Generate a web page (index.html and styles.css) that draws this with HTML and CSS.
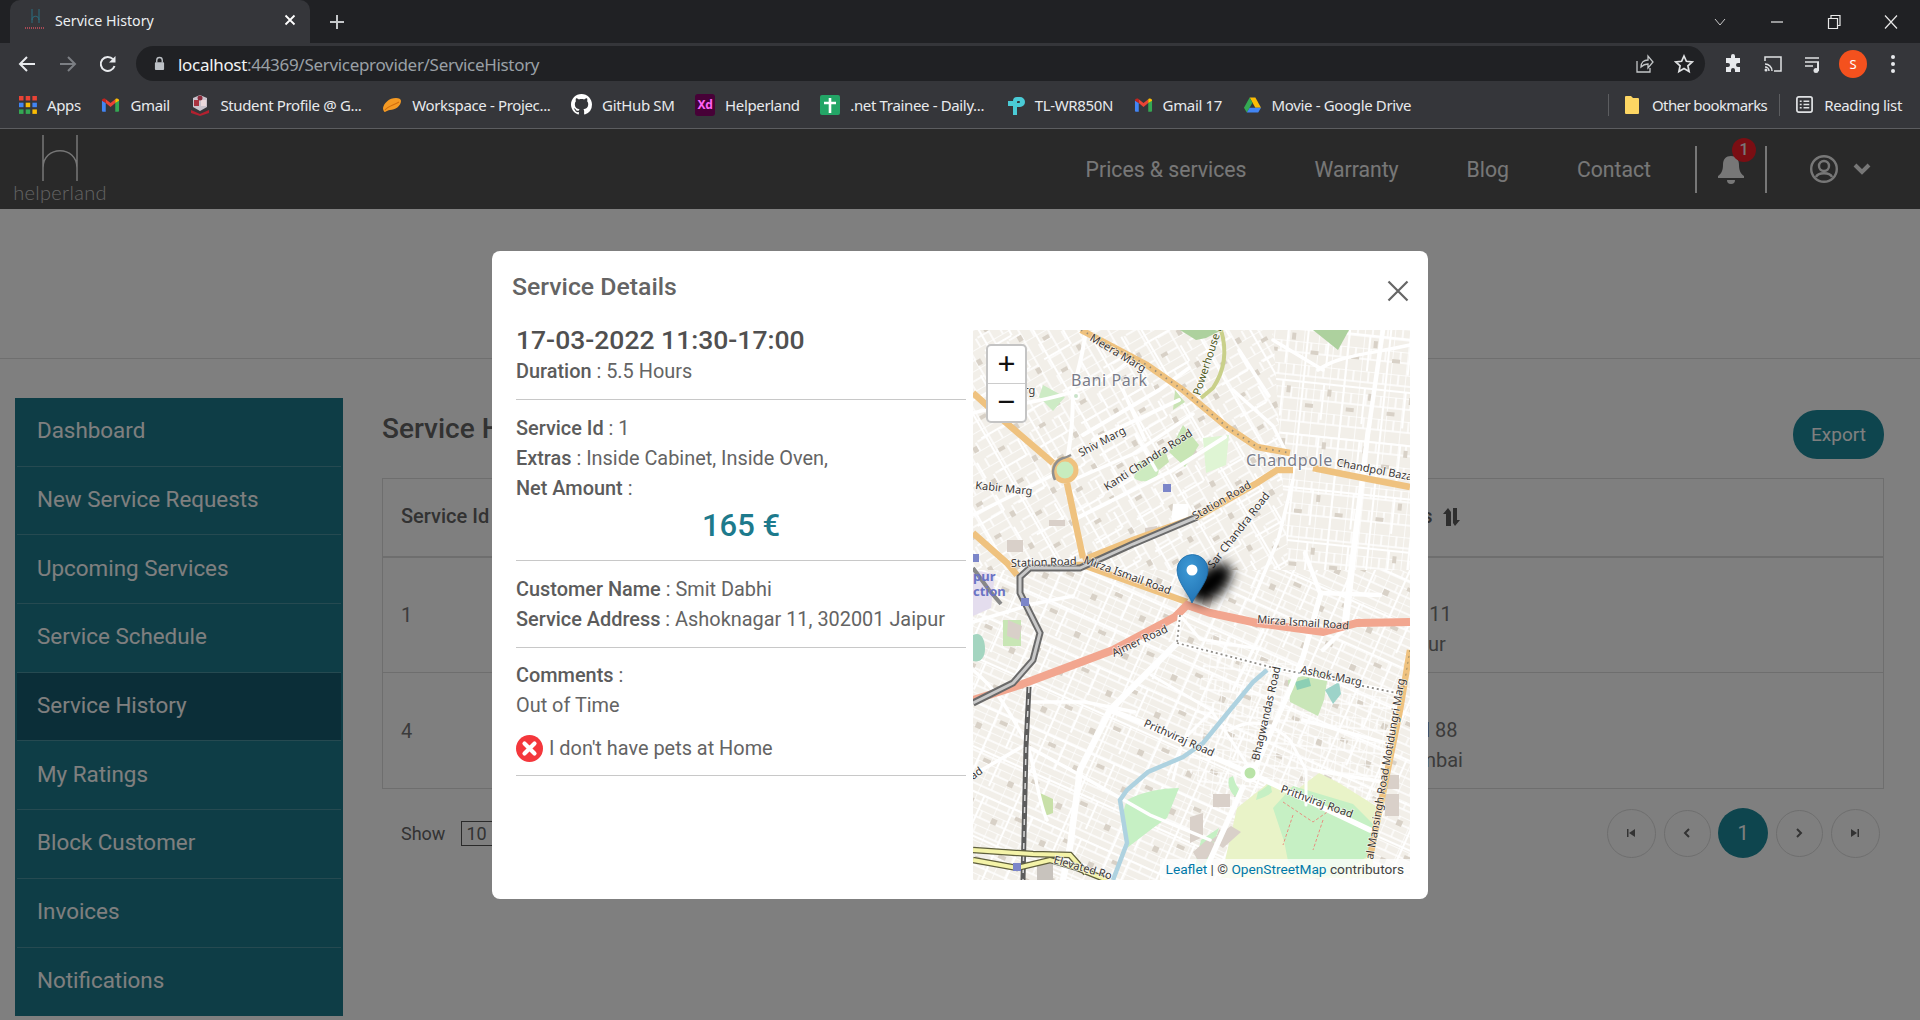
FILE: index.html
```html
<!DOCTYPE html>
<html lang="en">
<head>
<meta charset="utf-8">
<title>Service History</title>
<link rel="stylesheet" href="styles.css">
</head>
<body>
<svg class="defs" width="0" height="0" aria-hidden="true">
  <symbol id="gmail" viewBox="0 0 20 16">
    <path d="M1 15V3l4 3v9H2a1 1 0 0 1-1-1z" fill="#4285f4"/>
    <path d="M15 15V6l4-3v11a1 1 0 0 1-1 1z" fill="#34a853"/>
    <path d="M1 3.5C1 1.500 3 .5 4.500 1.500L5 2v4z" fill="#c5221f"/>
    <path d="M5 6V2l5 4 5-4v4l-5 4z" fill="#ea4335"/>
    <path d="M15 2l.5-.5C17 .5 19 1.500 19 3.500L15 6z" fill="#fbbc04"/>
  </symbol>
</svg>
<div class="chrome">
  <div class="tabstrip">
    <div class="tab">
      <svg class="favicon" viewBox="0 0 22 26" width="22" height="26"><path d="M8 2v14M15 2v14M8 13c0-5 7-5 7 0" fill="none" stroke="#2a6f80" stroke-width="1"/><path d="M1 21h20" stroke="#a84a55" stroke-width="2" stroke-dasharray="1 1"/></svg>
      <span class="tab-title">Service History</span>
      <svg class="tab-close" viewBox="0 0 12 12" width="12" height="12"><path d="M1.500 1.500l9 9M10.500 1.500l-9 9" stroke="#fff" stroke-width="1.800"/></svg>
    </div>
    <svg class="new-tab" viewBox="0 0 16 16" width="16" height="16"><path d="M8 1v14M1 8h14" stroke="#c4c7c9" stroke-width="2"/></svg>
    <div class="win-controls">
      <svg viewBox="0 0 14 14" width="14" height="14"><path d="M2 4l5 6 5-6" fill="none" stroke="#c8c8c8" stroke-width="1"/></svg>
      <svg viewBox="0 0 14 14" width="14" height="14"><path d="M1 7h12" stroke="#e8e8e8" stroke-width="1.200"/></svg>
      <svg viewBox="0 0 14 14" width="14" height="14"><path d="M1.500 3.500h9v10h-9zM4 3.500v-3h9v10h-2.500" fill="none" stroke="#e8e8e8" stroke-width="1.200"/></svg>
      <svg viewBox="0 0 14 14" width="14" height="14"><path d="M1 .5l12 13M13 .5l-12 13" stroke="#e8e8e8" stroke-width="1.200"/></svg>
    </div>
  </div>
  <div class="toolbar">
    <svg class="tool back" viewBox="0 0 18 18" width="18" height="18"><path d="M17 9H2M9 2L2 9l7 7" fill="none" stroke="#e8eaed" stroke-width="2"/></svg>
    <svg class="tool fwd" viewBox="0 0 18 18" width="18" height="18"><path d="M1 9h15M9 2l7 7-7 7" fill="none" stroke="#7c7f84" stroke-width="2"/></svg>
    <svg class="tool reload" viewBox="0 0 18 18" width="18" height="18"><path d="M15.500 11A7 7 0 1 1 14 4.200" fill="none" stroke="#e8eaed" stroke-width="2"/><path d="M16.500 1v6.500H10z" fill="#e8eaed"/></svg>
    <div class="omnibox">
      <svg viewBox="0 0 12 16" width="11" height="15"><path d="M3 7V4.500a3 3 0 0 1 6 0V7" fill="none" stroke="#bdc1c6" stroke-width="1.500"/><rect x="1" y="6.500" width="10" height="8.500" rx="1" fill="#bdc1c6"/></svg>
      <span class="url"><span class="url-host">localhost</span>:44369/Serviceprovider/ServiceHistory</span>
      <svg class="omni-share" viewBox="0 0 20 20" width="20" height="20"><path d="M3 7v11h13v-4M7 13c0-5 3-7 7-7V2l5 6-5 6v-4c-3 0-5 1-7 3z" fill="none" stroke="#c4c7c9" stroke-width="1.300"/></svg>
      <svg class="omni-star" viewBox="0 0 20 20" width="20" height="20"><path d="M10 2l2.400 5.300 5.800.6-4.300 3.900 1.200 5.700L10 14.600 4.900 17.500l1.200-5.700L1.800 7.900l5.800-.6z" fill="none" stroke="#e0e2e4" stroke-width="1.700"/></svg>
    </div>
    <svg class="tool puzzle" viewBox="0 0 20 20" width="20" height="20"><path d="M8 2a2 2 0 0 1 4 0v2h5v5h-2a2 2 0 0 0 0 4h2v5h-5v-2a2 2 0 0 0-4 0v2H3v-5h2a2 2 0 0 0 0-4H3V4h5z" fill="#e8eaed"/></svg>
    <svg class="tool cast" viewBox="0 0 20 20" width="20" height="20"><path d="M2 7V3h16v14h-7" fill="none" stroke="#e0e2e4" stroke-width="1.500"/><path d="M2 10a7 7 0 0 1 7 7M2 13a4 4 0 0 1 4 4" fill="none" stroke="#e0e2e4" stroke-width="1.500"/><circle cx="3" cy="16" r="1.500" fill="#e0e2e4"/></svg>
    <svg class="tool media" viewBox="0 0 20 20" width="20" height="20"><path d="M2 4h14M2 8h14M2 12h8" stroke="#e0e2e4" stroke-width="1.600"/><path d="M15 8v9" stroke="#e0e2e4" stroke-width="2"/><circle cx="13" cy="16.500" r="2.500" fill="#e0e2e4"/></svg>
    <div class="avatar">S</div>
    <svg class="tool dots" viewBox="0 0 6 20" width="6" height="20"><circle cx="3" cy="3" r="2" fill="#e8eaed"/><circle cx="3" cy="10" r="2" fill="#e8eaed"/><circle cx="3" cy="17" r="2" fill="#e8eaed"/></svg>
  </div>
  <div class="bookmarks">
    <div class="bm"><svg viewBox="0 0 18 18" width="18" height="18"><g><rect width="4.500" height="4.500" fill="#ea4335"/><rect x="6.700" width="4.500" height="4.500" fill="#ea4335"/><rect x="13.400" width="4.500" height="4.500" fill="#ea4335"/><rect y="6.700" width="4.500" height="4.500" fill="#4285f4"/><rect x="6.700" y="6.700" width="4.500" height="4.500" fill="#fbbc04"/><rect x="13.400" y="6.700" width="4.500" height="4.500" fill="#4285f4"/><rect y="13.400" width="4.500" height="4.500" fill="#34a853"/><rect x="6.700" y="13.400" width="4.500" height="4.500" fill="#34a853"/><rect x="13.400" y="13.400" width="4.500" height="4.500" fill="#fbbc04"/></g></svg><span>Apps</span></div>
    <div class="bm"><svg viewBox="0 0 20 16" width="19" height="16"><use href="#gmail"/></svg><span>Gmail</span></div>
    <div class="bm"><svg viewBox="0 0 20 22" width="20" height="22"><path d="M3 4l7-3 7 3v9l-7 4-7-4z" fill="#c9c3cc"/><path d="M4 6h5v6H4z" fill="#a8323f"/><path d="M11 6h5v6h-5z" fill="#ead9dc"/><circle cx="10" cy="4" r="2.500" fill="#8a2c3c"/><path d="M1 16l9 4 9-4v3l-9 3-9-3z" fill="#b3202f"/></svg><span>Student Profile @ G...</span></div>
    <div class="bm"><svg viewBox="0 0 20 16" width="20" height="16"><path d="M1 11C2 6 7 1 14 1c3 0 5 1 5 3 0 5-6 9-11 9-2 0-3 1-5 2-1 0-2-2-2-4z" fill="#f59a23"/><path d="M3 13c3-4 9-5 14-8" stroke="#d26d0d" stroke-width="1.200" fill="none"/></svg><span>Workspace - Projec...</span></div>
    <div class="bm"><svg viewBox="0 0 16 16" width="21" height="21"><path fill="#fff" d="M8 0C3.58 0 0 3.58 0 8c0 3.54 2.290 6.530 5.470 7.590.4.070.550-.170.550-.380 0-.190-.010-.820-.010-1.490-2.010.370-2.530-.490-2.690-.940-.090-.230-.480-.940-.820-1.130-.280-.150-.680-.520-.010-.530.630-.010 1.080.580 1.230.820.720 1.210 1.870.870 2.330.660.070-.520.280-.870.510-1.070-1.780-.2-3.640-.890-3.640-3.950 0-.870.310-1.590.820-2.150-.080-.2-.360-1.020.080-2.120 0 0 .670-.210 2.200.820.640-.180 1.320-.270 2-.270.680 0 1.360.090 2 .270 1.530-1.040 2.200-.820 2.200-.820.440 1.100.160 1.920.080 2.120.510.560.820 1.270.820 2.150 0 3.070-1.870 3.750-3.650 3.950.290.250.540.730.540 1.480 0 1.070-.010 1.930-.010 2.200 0 .210.150.460.550.380A8.013 8.013 0 0 0 16 8c0-4.420-3.580-8-8-8z"/></svg><span>GitHub SM</span></div>
    <div class="bm"><span class="xd">Xd</span><span>Helperland</span></div>
    <div class="bm"><svg viewBox="0 0 20 20" width="20" height="20"><rect width="20" height="20" rx="2" fill="#23a566"/><path d="M10 3v15M4 8h12" stroke="#fff" stroke-width="2.600"/></svg><span>.net Trainee - Daily...</span></div>
    <div class="bm"><svg viewBox="0 0 20 20" width="20" height="20"><path d="M8 20v-9H3V6h5a4 4 0 0 1 4-4h3a5 5 0 0 1 0 10h-3v8z M12 7v1h2a1 1 0 0 0 0-2h-1a1 1 0 0 0-1 1z" fill="#4acbd6" fill-rule="evenodd"/></svg><span>TL-WR850N</span></div>
    <div class="bm"><svg viewBox="0 0 20 16" width="19" height="16"><use href="#gmail"/></svg><span>Gmail 17</span></div>
    <div class="bm"><svg viewBox="0 0 20 18" width="19" height="18"><path d="M7 1h6l6 11h-6z" fill="#fbbc04"/><path d="M7 1l3 5.500L4 17 1 12z" fill="#34a853"/><path d="M4 17l3-5h12l-3 5z" fill="#4285f4"/></svg><span>Movie - Google Drive</span></div>
    <div class="bm-right">
      <div class="bm bm-sep bm-other"><svg viewBox="0 0 16 20" width="16" height="20"><path d="M1 2a1 1 0 0 1 1-1h5l2 2h5a1 1 0 0 1 1 1v14a1 1 0 0 1-1 1H2a1 1 0 0 1-1-1z" fill="#fdd663"/></svg><span>Other bookmarks</span></div>
      <div class="bm bm-sep"><svg viewBox="0 0 20 20" width="19" height="19"><rect x="2" y="2" width="16" height="16" rx="2" fill="none" stroke="#e0e2e4" stroke-width="1.800"/><path d="M5 6.500h2M9 6.500h6M5 10h2M9 10h6M5 13.500h2M9 13.500h6" stroke="#e0e2e4" stroke-width="1.500"/></svg><span>Reading list</span></div>
    </div>
  </div>
</div>

<div class="page">
  <header class="site-nav">
    <a class="logo">
      <svg viewBox="0 0 36 46" width="36" height="46"><path d="M1 0v46M35 0v46M1 33C1 10 35 10 35 33" fill="none" stroke="#ededed" stroke-width="1.500"/></svg>
      <span class="logo-text">helperland</span>
    </a>
    <nav class="nav-links">
      <a>Prices &amp; services</a>
      <a>Warranty</a>
      <a>Blog</a>
      <a>Contact</a>
    </nav>
    <div class="notif">
      <svg viewBox="0 0 26 30" width="26" height="30"><path d="M13 2c-5 0-8 3-8 9 0 6-2 9-5 11v2h26v-2c-3-2-5-5-5-11 0-6-3-9-8-9z" fill="#efefef"/><path d="M9 26h8a4 4 0 0 1-8 0z" fill="#efefef"/></svg>
      <span class="notif-badge">1</span>
    </div>
    <div class="user-menu">
      <svg viewBox="0 0 28 28" width="28" height="28"><circle cx="14" cy="14" r="12.800" fill="none" stroke="#efefef" stroke-width="2.400"/><circle cx="14" cy="11" r="5" fill="none" stroke="#efefef" stroke-width="2.400"/><path d="M6 22c2-5 14-5 16 0" fill="none" stroke="#efefef" stroke-width="2.400"/></svg>
      <svg viewBox="0 0 18 14" width="18" height="14"><path d="M2 3l7 7 7-7" fill="none" stroke="#efefef" stroke-width="4"/></svg>
    </div>
  </header>
  <div class="banner"></div>
  <div class="content">
    <aside class="sidebar">
      <a class="side-item">Dashboard</a>
      <a class="side-item">New Service Requests</a>
      <a class="side-item">Upcoming Services</a>
      <a class="side-item">Service Schedule</a>
      <a class="side-item side-active">Service History</a>
      <a class="side-item">My Ratings</a>
      <a class="side-item">Block Customer</a>
      <a class="side-item">Invoices</a>
      <a class="side-item">Notifications</a>
    </aside>
    <main class="main">
      <div class="main-head">
        <h1>Service History</h1>
        <a class="export">Export</a>
      </div>
      <table class="table">
        <colgroup><col class="col-id"><col class="col-date"><col class="col-addr"><col></colgroup>
        <thead>
          <tr><th>Service Id</th><th>Service Date</th><th>Customer Details <svg class="sort" viewBox="0 0 18 18" width="18" height="18"><path d="M3 18V6H0l5-6 3 4v14zM10 0h4v12h3l-5 6-2-3z" fill="#5c5c5c"/></svg></th><th></th></tr>
        </thead>
        <tbody>
          <tr><td>1</td><td>17-03-2022</td><td class="addr-cell">Ashoknagar 11<br>302001 Jaipur</td><td></td></tr>
          <tr><td>4</td><td>20-03-2022</td><td class="addr-cell">Marine Road 88<br>400001 Mumbai</td><td></td></tr>
        </tbody>
      </table>
      <div class="table-foot">
        <div class="show"><span>Show</span><span class="select">10</span></div>
        <div class="pager">
          <span class="page-slot"><span class="page-btn edge"><svg viewBox="0 0 10 10" width="10" height="10"><path d="M1 1v8h1.500V1zM9 1L3 5l6 4z" fill="#666"/></svg></span></span>
          <span class="page-slot"><span class="page-btn step"><svg viewBox="0 0 10 10" width="10" height="10"><path d="M7 1L3 5l4 4" fill="none" stroke="#666" stroke-width="2"/></svg></span></span>
          <span class="page-slot"><span class="page-btn current">1</span></span>
          <span class="page-slot"><span class="page-btn step"><svg viewBox="0 0 10 10" width="10" height="10"><path d="M3 1l4 4-4 4" fill="none" stroke="#666" stroke-width="2"/></svg></span></span>
          <span class="page-slot"><span class="page-btn edge"><svg viewBox="0 0 10 10" width="10" height="10"><path d="M1 1l6 4-6 4zM7.500 1v8H9V1z" fill="#666"/></svg></span></span>
        </div>
      </div>
    </main>
  </div>

  <div class="backdrop"></div>
  <section class="modal">
    <div class="modal-head">
      <h2>Service Details</h2>
      <svg class="modal-close" viewBox="0 0 22 22" width="22" height="22"><path d="M1.500 1.500l19 19M20.500 1.500l-19 19" stroke="#666" stroke-width="2.200"/></svg>
    </div>
    <div class="modal-body">
      <div class="details">
        <div class="block">
          <div class="when">17-03-2022 11:30-17:00</div>
          <div class="line"><b>Duration</b> : 5.5 Hours</div>
        </div>
        <div class="block">
          <div class="line"><b>Service Id</b> : 1</div>
          <div class="line"><b>Extras</b> : Inside Cabinet, Inside Oven,</div>
          <div class="line"><b>Net Amount</b> :</div>
          <div class="amount">165 €</div>
        </div>
        <div class="block">
          <div class="line"><b>Customer Name</b> : Smit Dabhi</div>
          <div class="line"><b>Service Address</b> : Ashoknagar 11, 302001 Jaipur</div>
        </div>
        <div class="block">
          <div class="line"><b>Comments</b> :</div>
          <div class="line">Out of Time</div>
          <div class="pets">
            <svg viewBox="0 0 27 27" width="27" height="27"><circle cx="13.500" cy="13.500" r="13.500" fill="#f4373c"/><path d="M8.500 8.500l10 10M18.500 8.500l-10 10" stroke="#fff" stroke-width="4.200" stroke-linecap="round"/></svg>
            <span>I don't have pets at Home</span>
          </div>
        </div>
      </div>
      <div class="map">
        <svg class="map-canvas" viewBox="0 0 437 550" width="437" height="550" role="img" aria-label="Map of Jaipur">
          <defs>
            <pattern id="grid-a" width="26" height="18" patternUnits="userSpaceOnUse" patternTransform="rotate(-30)"><path d="M0 0h26M0 9h13M13 0v18M24 9v9" stroke="#fff" stroke-width="1.500" fill="none"/></pattern>
            <pattern id="grid-a2" width="47" height="37" patternUnits="userSpaceOnUse" patternTransform="rotate(-30)"><path d="M5 0v37M0 24h30M31 6v18" stroke="#fff" stroke-width="2" fill="none"/><rect x="9" y="4" width="7" height="4" fill="#d8d1c7"/><rect x="34" y="28" width="5" height="6" fill="#d8d1c7"/></pattern>
            <pattern id="grid-b" width="15" height="23" patternUnits="userSpaceOnUse" patternTransform="rotate(6)"><path d="M0 0h15M0 0v23M8 0v11M0 11h15" stroke="#fff" stroke-width="1.500" fill="none"/></pattern>
            <pattern id="grid-b2" width="41" height="53" patternUnits="userSpaceOnUse" patternTransform="rotate(6)"><path d="M6 0v53M0 17h41M27 17v36" stroke="#fff" stroke-width="2" fill="none"/><rect x="31" y="22" width="4" height="7" fill="#d8d1c7"/><rect x="10" y="38" width="8" height="4" fill="#d8d1c7"/></pattern>
            <pattern id="grid-c" width="24" height="15" patternUnits="userSpaceOnUse" patternTransform="rotate(24)"><path d="M0 0h24M0 0v15M12 0v8M0 8h24" stroke="#fff" stroke-width="1.300" fill="none"/></pattern>
            <pattern id="grid-c2" width="53" height="41" patternUnits="userSpaceOnUse" patternTransform="rotate(24)"><path d="M0 11h53M20 0v41M41 11v30" stroke="#fff" stroke-width="2" fill="none"/><rect x="25" y="17" width="8" height="4" fill="#d8d1c7"/><rect x="4" y="28" width="6" height="6" fill="#d8d1c7"/></pattern>
            <radialGradient id="pin-shade" cx="0.400" cy="0.300" r="0.800"><stop offset="0" stop-color="#3d9ad6"/><stop offset="1" stop-color="#1f6fb0"/></radialGradient>
            <filter id="soft" x="-50%" y="-50%" width="200%" height="200%"><feGaussianBlur stdDeviation="6"/></filter>
            <filter id="tiny"><feGaussianBlur stdDeviation="0.400"/></filter>
          </defs>
          <rect width="437" height="550" fill="#f2efe9"/>
          <g filter="url(#tiny)">
            <rect width="437" height="240" fill="url(#grid-a)"/>
            <rect width="437" height="240" fill="url(#grid-a2)"/>
            <path d="M300 0h137v300H320l-10-140z" fill="#f2efe9"/>
            <path d="M300 0h137v300H320l-10-140z" fill="url(#grid-b)"/>
            <path d="M300 0h137v300H320l-10-140z" fill="url(#grid-b2)"/>
            <path d="M0 240h437v310H0z" fill="#f2efe9"/>
            <path d="M0 240h437v310H0z" fill="url(#grid-c)"/>
            <path d="M0 240h437v310H0z" fill="url(#grid-c2)"/>
            <path d="M235 300l190 70-30 170-120-30-60-70z" fill="url(#grid-b)"/>
            <!-- parks -->
            <path d="M207 0h42l-16 8-10 2z" fill="#add19e"/>
            <path d="M340 0h36l-11 20z" fill="#add19e"/>
            <path d="M210 95l16 20-14 22-16-15z" fill="#c8e6b5"/>
            <path d="M230 108l26-3-3 30-20 8z" fill="#dff5d4"/>
            <path d="M70 55l22 12-12 14-14-14z" fill="#cdebc5"/>
            <path d="M165 132c12-5 24 0 20 12-4 9-18 9-24 4z" fill="#cdebc0"/>
            <path d="M202 60l10 12-12 8zM178 128l14-8 4 12-10 8z" fill="#c9e3b4"/>
            <path d="M30 290h18v26H30z" fill="#c8e6b5"/>
            <path d="M0 305c8-4 12 4 12 14s-6 14-12 12z" fill="#a4d5c0"/>
            <path d="M67 463l13 6v14l-8 3-5-10z" fill="#c8e0a8"/>
            <path d="M315 350l30-8 10 4-4 24-6 16-28-14z" fill="#c9e6b8"/>
            <path d="M352 360l14-8 2 12-8 10z" fill="#9dd3c9"/>
            <path d="M322 352l14-4 2 8-14 4z" fill="#8ccfb4"/>
            <path d="M264 478l-16 70h150l8-70-40-25-20-10-20 15-32-4z" fill="#e9f3c8"/>
            <path d="M300 478l20-22 60 18 20 20-5 32-30 20h-25l-25-15-4-20z" fill="#c6f0c4"/>
            <path d="M154 470c14-8 35-12 52-12l-12 30-14 10-26 20-6-30z" fill="#c6f0c4"/>
            <path d="M228 510l18-12-12 36-14 10z" fill="#c6f0c4"/>
            <path d="M260 446c3 10 6 14 10 16l-6 6c-6-4-10-12-8-20zM285 462c4-2 10-6 12-10l2 10c-4 4-10 6-16 8z" fill="#c6f0c4"/>
            <path d="M310 472l30 20 20-14 30 20M320 485l-10 30M350 490l-10 30" fill="none" stroke="#e88f80" stroke-width="1" stroke-dasharray="3 2"/>
            <!-- buildings -->
            <path d="M35 290l14 6-3 14-12-4zM238 510l20-14 10 6-18 16zM232 262l8 4-3 12-8-4zM172 198l12-2v12l-12 2zM34 210h16v12H34zM76 190h16v6H76zM240 464h17v13h-17zM220 522l16-14 8 8-16 20zM217 487l13-4v24l-13 6zM408 445h18v14h-18zM412 464h14v22h-14z" fill="#d9d0c9"/>
            <path d="M64 530h16v20H64z" fill="#c8c3bd"/>
            <path d="M200 174h16l-2 18-16 2z" fill="#fff"/>
            <path d="M0 240l22 4-4 34-18 8z" fill="#e4ddee"/>
            <!-- secondary white roads -->
            <g fill="none" stroke="#fff" stroke-linecap="round">
              <path d="M0 83c30-8 60-8 102-22 30-10 40-18 60-35" stroke-width="3.500"/>
              <path d="M100 60c0 30-2 50-8 82M113 0c-3 25-8 40-13 60" stroke-width="4"/>
              <path d="M120 110l86-40M110 105l76-45 30-22" stroke-width="4"/>
              <path d="M150 60l22 50M163 105l20 35" stroke-width="3.500"/>
              <path d="M100 190l100-50 52-33" stroke-width="4"/>
              <path d="M0 185l80-40M100 150l60-26 60-40" stroke-width="3.500"/>
              <path d="M260 60l40 36 16 32M266 20l30 46" stroke-width="3.500"/>
              <path d="M345 40c20-14 40-14 92-25M300 10l50 30" stroke-width="3.500"/>
              <path d="M395 100l-25 200-20 20" stroke-width="4.500"/>
              <path d="M320 150l-15 60-25 60" stroke-width="3.500"/>
              <path d="M0 292l60-18 40-8M0 340c30 25 40 50 52 70 10 20 12 60 22 80" stroke-width="3.500"/>
              <path d="M0 445l52-30 55 30 70 40 60 25M52 372h60l50 10" stroke-width="3.500"/>
              <path d="M178 345l60 35 40 60M240 380l-30 30-10 40" stroke-width="3"/>
              <path d="M257 400c20-12 40-8 60 10l16 30v35" stroke-width="3"/>
              <path d="M207 285l20 24 60 10M290 300l-30 60" stroke-width="3"/>
              <path d="M330 390l90 25M340 440l70 12" stroke-width="3.500"/>
              <path d="M204 313L137 380 107 440 97 517 90 550" stroke-width="6.500"/>
              <path d="M348 263l-18 64-12 30-38 86" stroke-width="5.500"/>
              <path d="M347 263l60 2M347 263l-15-40" stroke-width="4.500"/>
              <path d="M137 380l33 13 70 34 37 16 120 57" stroke-width="5.500"/>
              <path d="M270 457l-33 73-8 20" stroke-width="5.500"/>
              <path d="M410 0l-16 110-20 180-8 10" stroke-width="4.500"/>
            </g>
            <!-- river -->
            <path d="M294 340L280 352 257 380 230 413 210 427 175 442 154 460 147 470 154 513 140 550" fill="none" stroke="#aed2e0" stroke-width="4.500"/>
            <!-- tertiary-green -->
            <path d="M248 0c6 20 4 40-8 58l-12 10" fill="none" stroke="#c9d08a" stroke-width="4"/>
            <!-- orange primaries -->
            <g fill="none" stroke="#efc27f" stroke-width="6.500">
              <path d="M108 0l66 35 36 25 44 37 30 20 33 6"/>
              <path d="M340 138l40 8 57 11"/>
              <path d="M0 63l30 27 50 43"/>
              <path d="M94 153l16 75"/>
              <path d="M110 230l50-20 64-23 60-34 20-13h16"/>
              <path d="M0 203l34 30 10 12"/>
              <path d="M100 235h10l104 37"/>
              <path d="M437 320l-10 60-17 83-13 64"/>
            </g>
            <!-- dashes along meera -->
            <path d="M108 0l66 35 36 25 44 37 30 20 33 6" fill="none" stroke="#9b8f78" stroke-width="1.800" stroke-dasharray="1.500 5"/>
            <path d="M437 320l-10 60-17 83" fill="none" stroke="#a08c62" stroke-width="1" stroke-dasharray="2 4"/>
            <!-- roundabouts -->
            <circle cx="92" cy="140" r="11" fill="#c7ecbe" stroke="#efc27f" stroke-width="5"/>
            <path d="M82 150c-4-8-2-18 8-22 2 0 6-2 8-3" fill="none" stroke="#8f8f8f" stroke-width="2.500"/>
            <circle cx="277" cy="443" r="7.500" fill="#b9e3a7" stroke="#fff" stroke-width="4"/>
            <circle cx="103" cy="66" r="3" fill="#c9e3c9" stroke="#fff" stroke-width="2"/>
            <!-- pink trunk -->
            <path d="M437 292l-53 1-34 9-66-9-47-10-23-8-12 12-62 33-93 35-47 15" fill="none" stroke="#f2a68f" stroke-width="8"/>
            <!-- dotted Ashok Marg -->
            <path d="M204 313l93 24 127 26M207 285l-3 28" fill="none" stroke="#fff" stroke-width="4.500"/>
            <path d="M204 313l93 24 127 26M207 285l-3 28" fill="none" stroke="#908d88" stroke-width="1.800" stroke-dasharray="2 3"/>
            <!-- rail -->
            <g fill="none">
              <path d="M0 373l40-20 20-23 7-27-20-40v-16l10-9h50l53-24 64-27" stroke="#6b6b6b" stroke-width="7"/>
              <path d="M0 373l40-20 20-23 7-27-20-40v-16l10-9h50l53-24 64-27" stroke="#c9c9c9" stroke-width="3"/>
              <path d="M56 357l-3 60-3 133" stroke="#5c5c5c" stroke-width="5"/>
              <path d="M56 357l-3 60-3 133" stroke="#d8d8d8" stroke-width="1.500" stroke-dasharray="6 6"/>
              <path d="M0 238l16 22 12 14" stroke="#888" stroke-width="4"/>
              <path d="M0 520l60 4 37 1 16 18M0 530l44 8 33-8 27 8 30 12" stroke="#5f5f3c" stroke-width="6.500"/>
              <path d="M0 520l60 4 37 1 16 18M0 530l44 8 33-8 27 8 30 12" stroke="#f4f3a8" stroke-width="4"/>
            </g>
            <rect x="190" y="154" width="8" height="8" fill="#7b86c9"/>
            <rect x="48" y="268" width="8" height="8" fill="#7b86c9"/>
            <rect x="0" y="224" width="6" height="8" fill="#7b86c9"/>
            <rect x="40" y="533" width="8" height="8" fill="#7b86c9"/>
          </g>
          <!-- labels -->
          <g class="road-label">
            <text transform="translate(116 10) rotate(31)">Meera Marg</text>
            <text transform="translate(227 66) rotate(-72)" class="lab-green">Powerhouse Ro</text>
            <text transform="translate(108 127) rotate(-28)">Shiv Marg</text>
            <text transform="translate(134 161) rotate(-33)">Kanti Chandra Road</text>
            <text transform="translate(2 159) rotate(6)">Kabir Marg</text>
            <text transform="translate(363 136) rotate(11)">Chandpol Bazar</text>
            <text transform="translate(222 190) rotate(-30)">Station Road</text>
            <text transform="translate(38 237) rotate(-2)">Station Road</text>
            <text transform="translate(240 239) rotate(-52)">Sar Chandra Road</text>
            <text transform="translate(110 233) rotate(20)">Mirza Ismail Road</text>
            <text transform="translate(284 293) rotate(4)">Mirza Ismail Road</text>
            <text transform="translate(141 327) rotate(-25)">Ajmer Road</text>
            <text transform="translate(327 343) rotate(12)">Ashok-Marg</text>
            <text transform="translate(170 396) rotate(24)">Prithviraj Road</text>
            <text transform="translate(307 462) rotate(20)">Prithviraj Road</text>
            <text transform="translate(286 431) rotate(-77)">Bhagwandas Road</text>
            <text transform="translate(400 530) rotate(-80)">al Mansingh Road Motidungri Marg</text>
            <text transform="translate(80 533) rotate(16)">Elevated Ro</text>
            <text transform="translate(51 64)">rg</text>
            <text transform="translate(0 450) rotate(-35)">ad</text>
          </g>
          <text class="area-label" x="98" y="56">Bani Park</text>
          <text class="area-label" x="273" y="136">Chandpole</text>
          <text class="station-label" x="0" y="251">pur</text>
          <text class="station-label" x="0" y="266">ction</text>
          <!-- marker -->
          <ellipse cx="238" cy="253" rx="25" ry="14" fill="#000" filter="url(#soft)" transform="rotate(-42 238 253)"/>
          <path d="M219 273c-3-9-15-21-15-33a15.500 15.500 0 0 1 31 0c0 12-12 24-16 33z" fill="url(#pin-shade)" stroke="#1c6ca8" stroke-width="0.800"/>
          <circle cx="219" cy="240" r="5.500" fill="#fff"/>
        </svg>
        <div class="zoom-ctl"><span class="zoom-btn">+</span><span class="zoom-btn">−</span></div>
        <div class="attrib"><a>Leaflet</a> | © <a>OpenStreetMap</a> contributors</div>
      </div>
    </div>
  </section>
</div>
</body>
</html>
```

FILE: styles.css
```css
* { box-sizing: border-box; }
html, body { margin: 0; height: 1020px; overflow: hidden; }
body { display: flex; flex-direction: column; font-family: Roboto, "Liberation Sans", sans-serif; background: #fff; }
.defs { position: absolute; }

/* browser chrome */
.chrome { flex: none; color: #e8eaed; background: #35363a; font-family: "Noto Sans", Roboto, sans-serif; }
.tabstrip { height: 43px; background: #202124; display: flex; align-items: flex-end; padding-left: 10px; }
.tab { width: 300px; height: 43px; background: #35363a; border-radius: 10px 10px 0 0; display: flex; align-items: center; padding: 0 14px 3px 14px; }
.favicon { flex: none; margin-right: 9px; }
.tab-title { flex: 1; font-size: 14.200px; color: #eceff1; }
.new-tab { margin: 0 0 13px 19px; }
.win-controls { margin-left: auto; align-self: center; display: flex; gap: 43px; padding-right: 22px; }
.toolbar { height: 41px; display: flex; align-items: center; padding: 0 0 0 18px; }
.tool { flex: none; }
.fwd { margin-left: 23px; }
.reload { margin-left: 22px; }
.omnibox { margin: 0 0 0 19px; width: 1569px; height: 35px; background: #202124; border-radius: 18px; display: flex; align-items: center; padding: 0 11px 0 18px; }
.url { margin-left: 13px; padding-top: 2px; font-size: 17px; color: #9aa0a6; letter-spacing: -0.310px; }
.url-host { color: #f1f3f4; }
.omni-share { margin-left: auto; }
.omni-star { margin-left: 20px; }
.puzzle { margin-left: 18px; }
.cast { margin-left: 20px; }
.media { margin-left: 20px; }
.avatar { width: 28px; height: 28px; border-radius: 50%; background: #f4511e; color: #fff; font-size: 13px; display: flex; align-items: center; justify-content: center; margin-left: 16px; }
.dots { margin-left: 23px; }
.bookmarks { height: 45px; display: flex; align-items: center; padding: 0 0 3px 19px; gap: 20.600px; border-bottom: 1px solid #5c5d60; font-size: 15px; color: #e8eaed; }
.bm { display: flex; align-items: center; gap: 10px; white-space: nowrap; letter-spacing: -0.350px; }
.bm svg { flex: none; }
.xd { width: 20px; height: 22px; background: #470137; color: #ff61f6; border-radius: 3px; font-size: 12px; font-weight: 700; display: flex; align-items: center; justify-content: center; }
.bm-right { margin-left: auto; display: flex; align-items: center; padding-right: 18px; }
.bm-sep { border-left: 1px solid #5c5d60; height: 22px; padding-left: 15px; margin-left: 12px; }
.bm-other { letter-spacing: -0.600px; gap: 12px; }

/* page */
.page { position: relative; flex: 1; min-height: 0; color: #777; overflow: hidden; }
.site-nav { height: 80px; background: #525252; display: flex; align-items: center; padding-right: 49px; }
.logo { width: 120px; position: relative; height: 80px; display: flex; flex-direction: column; align-items: center; padding: 6px 0 0 0; color: #c8c8c8; }
.logo-text { font-family: Lato, sans-serif; font-weight: 300; font-size: 20px; line-height: 20px; margin-top: 1px; letter-spacing: .3px; }
.nav-links { margin-left: auto; display: flex; gap: 68px; font-size: 21.200px; color: #efefef; }
.notif { position: relative; width: 72px; height: 47px; margin-left: 44px; border-left: 2px solid #efefef; border-right: 2px solid #efefef; display: flex; align-items: center; justify-content: center; }
.notif-badge { position: absolute; top: -8px; right: 9px; width: 24px; height: 24px; border-radius: 50%; background: #f41c27; color: #f0f0f0; font-size: 16px; font-weight: 500; display: flex; align-items: center; justify-content: center; }
.user-menu { margin-left: 43px; display: flex; align-items: center; gap: 15px; }
.banner { height: 150px; border-bottom: 1px solid #dedede; }
.content { display: flex; align-items: flex-start; padding: 39px 36px 0 15px; }
.sidebar { flex: none; width: 328px; background: #1d7a8c; padding: 0 2px; }
.side-item { display: flex; align-items: center; height: 68.700px; padding: 0 0 3px 20px; font-size: 22.400px; color: #fff; border-bottom: 1px solid #4d94a3; }
.side-item:last-child { border-bottom: 0; }
.side-active { background: #175d70; }
.main { flex: 1; margin-left: 39px; min-width: 0; }
.main-head { display: flex; justify-content: space-between; align-items: flex-start; margin-top: 12px; height: 49px; }
.main-head h1 { margin: 1px 0 0; font-size: 28px; line-height: 36px; font-weight: 500; color: #646464; }
.export { height: 49px; width: 91px; border-radius: 24px; background: #1d8a9c; color: #fff; font-size: 19px; display: flex; align-items: center; justify-content: center; }
.table { width: 100%; margin-top: 19px; border-collapse: collapse; table-layout: fixed; font-size: 20px; line-height: 30px; border: 1px solid #dcdcdc; }
.col-id { width: 150px; }
.col-date { width: 728px; }
.col-addr { width: 260px; }
th { height: 78px; padding: 0 18px 3px; text-align: left; font-weight: 500; color: #646464; border-bottom: 2px solid #dcdcdc; white-space: nowrap; }
.sort { vertical-align: -3px; margin-left: 5px; }
td { height: 116px; padding: 0 18px; border-bottom: 1px solid #dcdcdc; white-space: nowrap; color: #777; }
.addr-cell { padding: 29px 0 0 57px; }
.table-foot { display: flex; justify-content: space-between; align-items: center; margin-top: 19px; }
.show { display: flex; align-items: center; gap: 16px; padding-left: 19px; font-size: 18px; color: #666; }
.select { display: block; width: 50px; height: 25px; line-height: 23px; padding-left: 4px; border: 1px solid #555; font-size: 18px; }
.pager { display: flex; margin-right: 1px; }
.page-slot { width: 56px; height: 50px; display: flex; align-items: center; justify-content: center; }
.page-btn { display: flex; align-items: center; justify-content: center; border-radius: 50%; border: 1px solid #dcdcdc; }
.edge { width: 49px; height: 49px; }
.step { width: 47px; height: 47px; }
.current { width: 50px; height: 50px; background: #1d8a9c; border: 0; color: #fff; font-size: 20px; }

/* overlay */
.backdrop { position: absolute; inset: 0; background: rgba(0, 0, 0, .5); }
.modal { position: absolute; left: 492px; top: 122px; width: 936px; height: 648px; background: #fff; border-radius: 8px; color: #646464; }
.modal-head { height: 71px; display: flex; justify-content: space-between; align-items: flex-start; padding: 20px 19px 0 20px; }
.modal-head h2 { margin: 0; font-size: 24.800px; line-height: 32px; font-weight: 500; color: #646464; }
.modal-close { margin-top: 9px; }
.modal-body { display: flex; padding-left: 24px; }
.details { width: 450px; font-size: 19.900px; line-height: 30px; }
.block { padding: 13px 0; border-bottom: 1px solid #c8c8c8; }
.block:first-child { padding-top: 0; }
.block:not(:last-child) .line { padding-top: 1px; margin-bottom: -1px; }
.when { font-size: 26.500px; line-height: 34px; padding-top: 1px; margin-bottom: -1px; font-weight: 500; color: #505050; }
.line b { font-weight: 500; color: #5c5c5c; }
.amount { font-size: 31px; line-height: 44px; padding-top: 1px; margin-bottom: -1px; font-weight: 500; color: #1d7a8c; text-align: center; }
.pets { display: flex; align-items: center; gap: 6px; height: 28px; margin-top: 13px; }
.pets span { padding-top: 2px; }
.map { position: relative; width: 437px; height: 550px; margin: 8px 0 0 7px; overflow: hidden; }
.map-canvas { display: block; }
.road-label text { font-family: "Noto Sans", "DejaVu Sans", sans-serif; font-size: 11px; fill: #3a3634; paint-order: stroke; stroke: rgba(255,255,255,.7); stroke-width: 1.500px; }
.road-label .lab-green { fill: #4f5a1e; }
.area-label { font-family: "Noto Sans", "DejaVu Sans", sans-serif; font-size: 16px; fill: #7a7d8a; letter-spacing: .6px; paint-order: stroke; stroke: rgba(255,255,255,.7); stroke-width: 2px; }
.station-label { font-family: "Noto Sans", sans-serif; font-size: 13px; font-weight: 700; fill: #6a73c4; }
.zoom-ctl { position: absolute; left: 13px; top: 14px; width: 41px; border: 2px solid #c4c4c4; border-radius: 5px; background: #fff; display: flex; flex-direction: column; }
.zoom-btn { height: 37.500px; padding-bottom: 3px; display: flex; align-items: center; justify-content: center; font-family: "DejaVu Sans Mono", monospace; font-size: 29px; font-weight: 400; color: #111; }
.zoom-btn:first-child { border-bottom: 1px solid #ccc; }
.attrib { position: absolute; right: 0; bottom: 0; height: 21px; padding: 0 6px 2px; display: flex; align-items: center; white-space: pre; background: rgba(255,255,255,.75); font-size: 13.700px; color: #444; }
.attrib a { color: #0078a8; }
```
